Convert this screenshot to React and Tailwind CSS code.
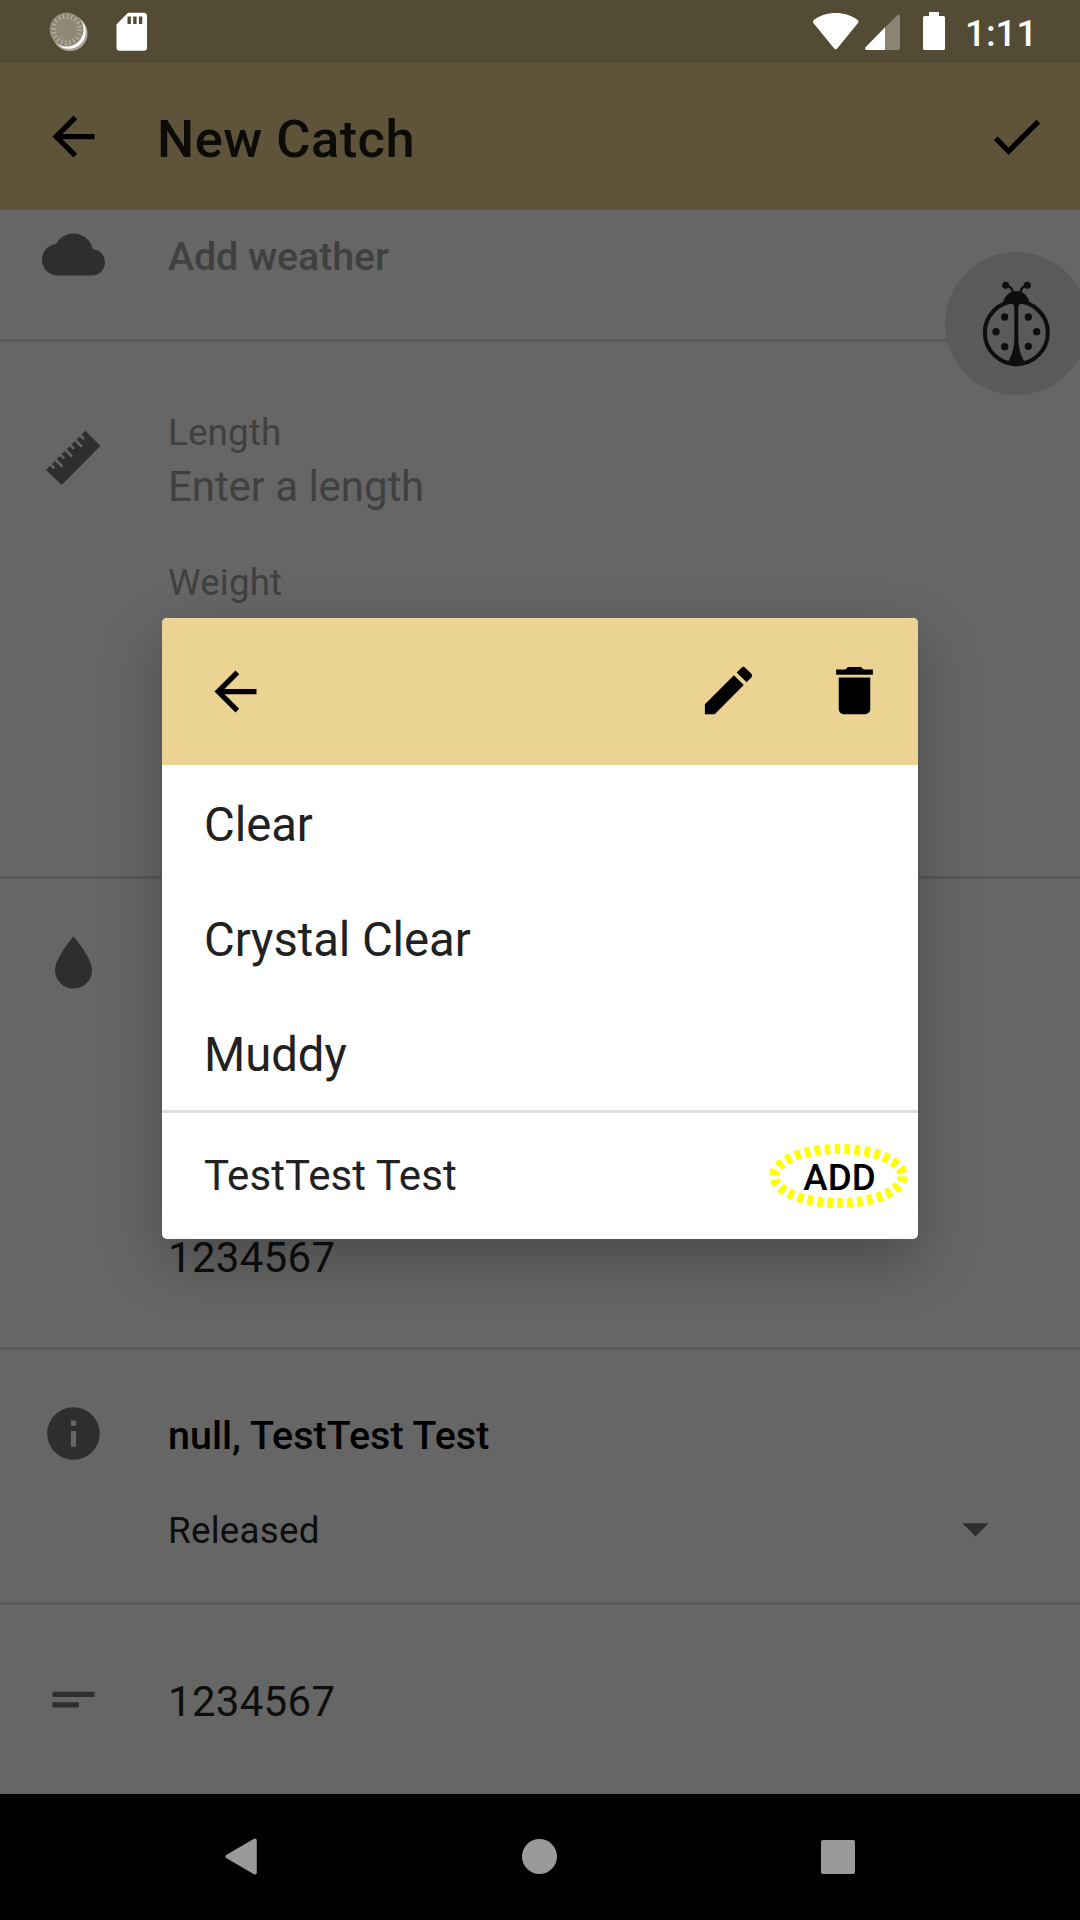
import React from "react";

const ROBOTO = "font-['Roboto',sans-serif]";

// 24-unit Material glyph
function Glyph({ d, className = "" }) {
  return (
    <svg viewBox="0 0 24 24" className={`block size-[63px] shrink-0 fill-current ${className}`}>
      <path d={d} />
    </svg>
  );
}

const BACK = "M20 11H7.83l5.59-5.59L12 4l-8 8 8 8 1.41-1.41L7.83 13H20z";
const CHECK = "M9 16.17 4.83 12l-1.42 1.41L9 19 21 7l-1.41-1.41z";
const CLOUD =
  "M19.35 10.04C18.67 6.59 15.64 4 12 4 9.11 4 6.6 5.64 5.35 8.04 2.34 8.36 0 10.91 0 14c0 3.31 2.69 6 6 6h13c2.76 0 5-2.24 5-5 0-2.64-2.05-4.78-4.65-4.96z";
const DROP = "M12 1.98C15.2 6 19.05 11.2 19.05 14.9a7.05 7.05 0 0 1-14.1 0C4.95 11.2 8.8 6 12 1.98z";
const INFO = "M12 2C6.48 2 2 6.48 2 12s4.48 10 10 10 10-4.48 10-10S17.52 2 12 2zm1 15h-2v-6h2v6zm0-8h-2V7h2v2z";
const SHORT_TEXT = "M4 9h16v2H4zM4 13h10v2H4z";
const ARROW_DOWN = "m7 10 5 5 5-5z";
const EDIT =
  "M3 17.25V21h3.75L17.81 9.94l-3.75-3.75zM20.71 7.04a.996.996 0 0 0 0-1.41l-2.34-2.34a.996.996 0 0 0-1.41 0l-1.83 1.83 3.75 3.75z";
const TRASH = "M6 19c0 1.1.9 2 2 2h8c1.1 0 2-.9 2-2V7H6zM19 4h-3.5l-1-1h-5l-1 1H5v2h14z";

// Seven graduations along the upper edge, every second one longer
function Ruler() {
  return (
    <svg viewBox="0 0 63 63" className="mt-[84px] block size-[63px]">
      <path fill="#2e2e2e" d="M4 43.800 43.300 4.700 58.300 20 19.600 59z" />
      <g stroke="#666666" strokeWidth="2.500">
        <path d="M7.400 37.400l5 5M17.200 27.600l5 5M27 17.800l5 5M36.900 8l5 5" />
        <path d="M12.300 32.500l8 8M22.100 22.700l8 8M32 12.900l8 8" />
      </g>
    </svg>
  );
}

function StatusBar() {
  return (
    <div className="flex h-[63px] items-start bg-[#544b34] text-white">
      <svg className="ml-[48px] mt-[10px] block h-[44px] w-[42px]" viewBox="0 0 42 44">
        <circle cx="22" cy="23.5" r="17.6" fill="#aaa595" />
        <circle cx="20.8" cy="21.8" r="17" fill="#ffffff" />
        <circle cx="18.6" cy="19.6" r="17" fill="#8f8875" />
        <circle cx="18.6" cy="19.6" r="13.2" fill="none" stroke="#b9b4a6" strokeWidth="5" strokeDasharray="1.2 2.947" />
      </svg>
      <svg className="ml-[22px] mt-[12px] block h-[40px] w-[38px]" viewBox="0 0 38 40">
        <path fill="#fff" d="M16 .8h15.5a3.5 3.5 0 0 1 3.5 3.5v31.400a3 3 0 0 1-3 3H7.500a3 3 0 0 1-3-3V12.400z" />
        <path fill="#544b34" d="M15.500 4.500h3.400V12h-3.400zM21.200 4.500h3.400V12h-3.400zM26.900 4.500h3.400V12h-3.400z" />
      </svg>
      <div className="flex-1" />
      <svg className="mt-[12px] block h-[40px] w-[48px]" viewBox="0 0 48 40">
        <path
          fill="#fff"
          d="M23.200 36.600 2.600 11.200c-1-1.200-.9-2.500.3-3.200C9 3.200 16.200 1 24.700 1s15.800 2.200 21.800 7c1.200.7 1.300 2 .3 3.200L26.200 36.600c-.9 1-1.900 1-3 0z"
        />
      </svg>
      <svg className="ml-[6px] mt-[14px] block h-[37px] w-[36px]" viewBox="0 0 36 37">
        <path fill="#8b8473" d="M20 13.500 32 1.400c1.300-1.200 3-.6 3 1.100V34a2 2 0 0 1-2 2H20z" />
        <path fill="#fff" d="M20 13.200V36H1.500C-.1 36-.4 34.300.6 33.200z" />
      </svg>
      <svg className="ml-[22px] mt-[12px] block h-[38px] w-[22px]" viewBox="0 0 22 38">
        <path fill="#fff" d="M6 0h10v4h4.500A1.500 1.500 0 0 1 22 5.500v31a1.500 1.500 0 0 1-1.500 1.500h-19A1.500 1.500 0 0 1 0 36.500v-31A1.500 1.500 0 0 1 1.500 4H6z" />
      </svg>
      <span className="ml-[20px] mr-[43px] mt-[12px] w-[72px] whitespace-nowrap text-[36.75px] font-medium leading-[44px]">
        1:11
      </span>
    </div>
  );
}

function AppBar() {
  return (
    <div className="flex h-[147px] items-center bg-[#5e5439] pl-[42px] pr-[32px] text-black">
      <Glyph d={BACK} />
      <h1 className="ml-[52px] flex-1 pt-[4px] text-[52.5px] font-medium leading-[62px] tracking-[0.45px] text-[#0c0b07]">
        New Catch
      </h1>
      <Glyph d={CHECK} className="-mt-[1px]" />
    </div>
  );
}

function Section({ icon, className, children }) {
  return (
    <section className={`flex pl-[42px] ${className}`}>
      <div className="w-[126px] shrink-0 text-[#2e2e2e]">{icon}</div>
      <div className="flex-1">{children}</div>
    </section>
  );
}

function Ladybug() {
  return (
    <svg viewBox="0 0 180 200" className="block h-[200px] w-[180px]">
      <g fill="#0d0e0f" transform="scale(.33333)">
        <ellipse cx="349" cy="338" rx="94.500" ry="94" fill="none" stroke="#0d0e0f" strokeWidth="12" />
        <path d="M309 250c3-22 20-37 40-37s37 15 40 37l-12-2c-12 0-21 2-22 14v98c2 32 10 52 20 66l-8 8c-11 6-25 6-36 0l-8-8c10-14 18-34 20-66v-98c-1-12-10-14-22-14z" />
        <circle cx="317" cy="196" r="10.500" />
        <circle cx="382" cy="196" r="10.500" />
        <path d="M320 196c10 3 17 10 19 21M379 196c-10 3-16 10-18 21" fill="none" stroke="#0d0e0f" strokeWidth="7" />
        <circle cx="314" cy="291" r="11" />
        <circle cx="385" cy="291" r="11" />
        <circle cx="288" cy="335" r="11" />
        <circle cx="410" cy="335" r="11" />
        <circle cx="314" cy="380" r="11" />
        <circle cx="385" cy="379" r="11" />
      </g>
    </svg>
  );
}

function Dialog() {
  const rows = ["Clear", "Crystal Clear", "Muddy"];
  return (
    <div className="w-[756px] overflow-hidden rounded-[5px] bg-white text-[#212121] shadow-[0_22px_60px_rgba(0,0,0,0.28)]">
      <div className="flex h-[147px] items-center bg-[#ead393] pl-[42px] pr-[32px] text-black">
        <Glyph d={BACK} />
        <div className="flex-1" />
        <Glyph d={EDIT} className="-mt-[2px] mr-[63px]" />
        <Glyph d={TRASH} className="-mt-[2px]" />
      </div>
      <ul className="h-[345px]">
        {rows.map((r) => (
          <li key={r} className="h-[115px] pl-[42px] pt-[32px] text-[47.25px] leading-[56px] tracking-[-0.05px]">
            {r}
          </li>
        ))}
      </ul>
      <div className="flex h-[129px] items-center justify-between border-t-[3px] border-[#dedede] pl-[42px] pr-[10px]">
        <span className="text-[42px] leading-[50px] tracking-[0.08px]">TestTest Test</span>
        <button className="relative flex h-[64px] w-[139px] items-center justify-center text-[36.75px] font-medium leading-[44px] text-black">
          <span className="pl-[2px] pt-[3px]">ADD</span>
          <svg className="absolute inset-0 block h-[64px] w-[139px]" viewBox="0 0 139 64">
            <ellipse
              cx="69.500"
              cy="32"
              rx="64.300"
              ry="27"
              fill="none"
              stroke="#ffff00"
              strokeWidth="10"
              strokeDasharray="5.600 4.370"
              strokeDashoffset="-0.500"
            />
          </svg>
        </button>
      </div>
    </div>
  );
}

export default function App() {
  return (
    <div className={`relative flex h-[1920px] w-[1080px] flex-col overflow-hidden bg-[#666666] text-[#0e0e0e] ${ROBOTO}`}>
      <StatusBar />
      <AppBar />

      <Section icon={<Glyph d={CLOUD} className="mt-[13px]" />} className="h-[132px] border-b-[3px] border-[#595959]">
        <p className="mt-[21px] text-[39.375px] font-medium leading-[52px] tracking-[-0.08px] text-[#404040]">Add weather</p>
      </Section>

      <Section icon={<Ruler />} className="h-[537px] border-b-[3px] border-[#595959]">
        <div className="text-[#404040]">
          <p className="mt-[69px] text-[36.75px] leading-[44px] tracking-[0.15px]">Length</p>
          <p className="mt-[7px] text-[42px] leading-[50px] tracking-[-0.07px]">Enter a length</p>
          <p className="mt-[49px] text-[36.75px] leading-[44px] tracking-[0.15px]">Weight</p>
        </div>
      </Section>

      <Section icon={<Glyph d={DROP} className="mt-[52px]" />} className="h-[471px] border-b-[3px] border-[#595959]">
        <p className="mt-[354px] text-[42px] leading-[50px] tracking-[0.3px]">1234567</p>
      </Section>

      <Section icon={<Glyph d={INFO} className="mt-[52px]" />} className="h-[255px] border-b-[3px] border-[#595959]">
        <p className="mt-[60px] text-[39.375px] font-medium leading-[52px] tracking-[0.06px] text-black">null, TestTest Test</p>
        <div className="mt-[35px] flex items-center justify-between pr-[73px]">
          <span className="pt-[4px] text-[36.75px] leading-[44px] tracking-[0.25px]">Released</span>
          <Glyph d={ARROW_DOWN} className="text-[#2e2e2e]" />
        </div>
      </Section>

      <Section icon={<Glyph d={SHORT_TEXT} className="mt-[63px]" />} className="h-[189px]">
        <p className="mt-[72px] text-[42px] leading-[50px] tracking-[0.3px]">1234567</p>
      </Section>

      <nav className="flex h-[126px] items-center bg-black pb-[1px]">
        <svg className="ml-[225px] block h-[37px] w-[33px]" viewBox="0 0 33 37">
          <path fill="#9a9a9a" d="M1.200 17 29 .8c1.400-.7 2.800.1 2.800 1.700v32c0 1.600-1.400 2.400-2.800 1.700L1.200 20c-1.200-.8-1.200-2.200 0-3z" />
        </svg>
        <div className="ml-[264px] size-[35px] rounded-full bg-[#9a9a9a]" />
        <div className="ml-[264px] size-[34px] rounded-[2px] bg-[#9a9a9a]" />
      </nav>

      {/* Floating debug button, partly off the right edge */}
      <div className="absolute left-[945px] top-[252px] size-[143px] rounded-full bg-[#5a5a5a]">
        <div className="-ml-[45px] -mt-[32px]">
          <Ladybug />
        </div>
      </div>

      <div className="absolute inset-x-0 bottom-[126px] top-[63px] flex items-center justify-center">
        <Dialog />
      </div>
    </div>
  );
}
